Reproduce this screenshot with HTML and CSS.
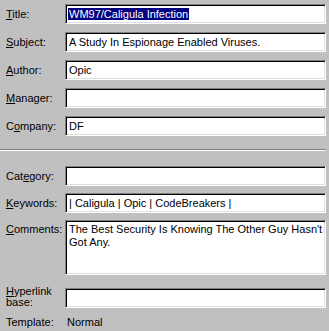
FILE: index.html
```html
<!DOCTYPE html>
<html lang="en">
<head>
	<meta charset="UTF-8">
	<title>Properties</title>
	<link rel="stylesheet" href="styles.css">
</head>
<body>

	<div class="props">
		<div class="props-grid top">
			<label class="lbl"><u>T</u>itle:</label>
			<div class="field"><span class="sel">WM97/Caligula Infection</span></div>

			<label class="lbl"><u>S</u>ubject:</label>
			<div class="field">A Study In Espionage Enabled Viruses.</div>

			<label class="lbl"><u>A</u>uthor:</label>
			<div class="field">Opic</div>

			<label class="lbl"><u>M</u>anager:</label>
			<div class="field"></div>

			<label class="lbl">C<u>o</u>mpany:</label>
			<div class="field">DF</div>
		</div>

		<div class="sep"></div>

		<div class="props-grid bottom">
			<label class="lbl">Cat<u>e</u>gory:</label>
			<div class="field"></div>

			<label class="lbl"><u>K</u>eywords:</label>
			<div class="field">| Caligula | Opic | CodeBreakers |</div>

			<label class="lbl lbl-top"><u>C</u>omments:</label>
			<div class="field memo">The Best Security Is Knowing The Other Guy Hasn't<br>Got Any.</div>

			<label class="lbl lbl-two"><u>H</u>yperlink<br>base:</label>
			<div class="field link"></div>

			<span class="lbl">Template:</span>
			<span class="value">Normal</span>
		</div>
	</div>

</body>
</html>
```

FILE: styles.css
```css
body{
	margin:0;
	background:#c0c0c0;
	font-family:"Liberation Sans", Arial, sans-serif;
	font-size:11px;
	color:#000;
}
.props{
	width:329px;
	height:331px;
	overflow:hidden;
}
.props-grid{
	display:grid;
	grid-template-columns:59px 261px;
	grid-auto-rows:20px;
	row-gap:8px;
	padding-left:6px;
}
.props-grid.top{
	padding-top:4px;
}
.props-grid.bottom{
	padding-top:15px;
	row-gap:7px;
	grid-template-rows:20px 20px 55px 26px 14px;
}
.lbl{
	align-self:center;
	white-space:nowrap;
	line-height:13px;
}
.lbl u{
	text-decoration-thickness:1px;
	text-underline-offset:1px;
}
.lbl-top{
	align-self:start;
	padding-top:3px;
}
.lbl-two{
	align-self:start;
	margin-top:4px;
	line-height:11px;
}
.field{
	box-sizing:border-box;
	height:20px;
	background:#fff;
	border:1px solid;
	border-color:#808080 #fff #fff #808080;
	box-shadow:inset 1px 1px 0 #000, inset -1px -1px 0 #dfdfdf;
	padding:1px 2px 0 3px;
	line-height:16px;
	white-space:nowrap;
	overflow:hidden;
}
.field.memo{
	height:55px;
	line-height:13px;
	padding-top:2px;
}
.field.link{
	margin-top:6px;
}
.sel{
	background:#000080;
	color:#fff;
	margin-left:-1px;
	padding:0 1px;
}
.sep{
	margin:13px 3px 0 0;
	border-top:1px solid #808080;
	border-bottom:1px solid #fff;
}
.value{
	align-self:center;
	padding-left:2px;
	line-height:13px;
}
```
